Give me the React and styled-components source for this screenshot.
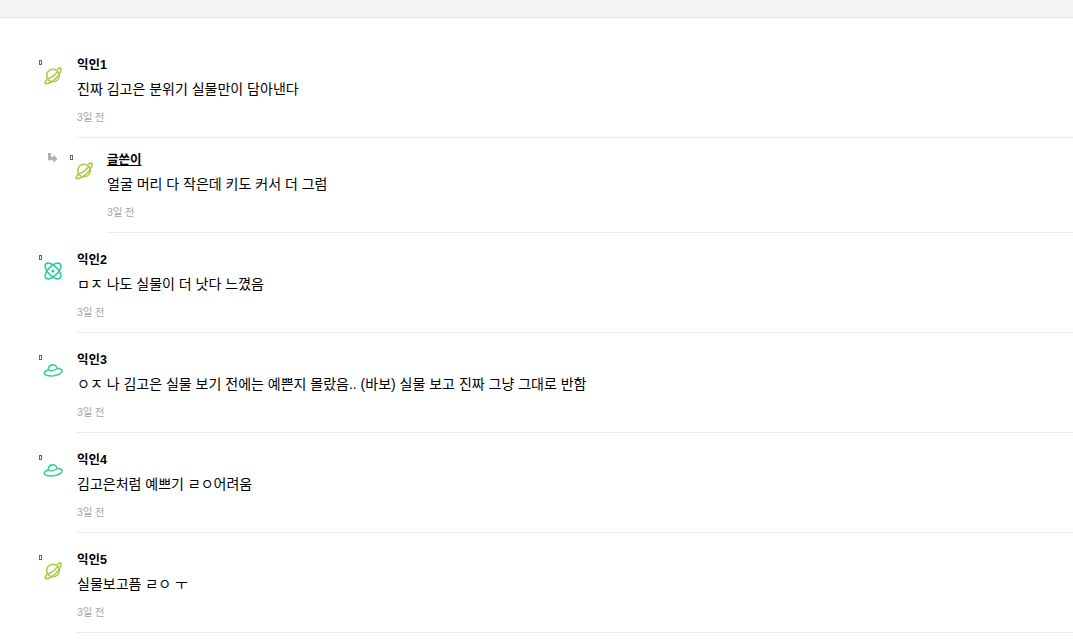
import React from "react";
import styled, { createGlobalStyle } from "styled-components";

const Global = createGlobalStyle`
  html, body { margin: 0; padding: 0; background: #fff; overflow: hidden; }
  body { font-family: "Liberation Sans", "Noto Sans CJK KR", sans-serif; color: #000; }
`;
const TopBar = styled.div`
  height: 17px;
  background: #f4f4f4;
  border-bottom: 1px solid #e4e4e4;
`;
const List = styled.div`
  padding-top: 20px;
  display: flex;
  flex-direction: column;
`;
const Row = styled.div`
  display: flex;
  padding-left: ${p => (p.$reply ? 47 : 39)}px;
`;
const ReplyArrow = styled.svg`
  width: 11px;
  height: 10px;
  margin-top: 15px;
  margin-right: 12px;
  flex: none;
  fill: #b0b0b0;
`;
const Avatar = styled.div`
  width: 37px;
  flex: none;
  display: flex;
  flex-direction: column;
  align-items: flex-start;
  padding-top: ${p => (p.$reply ? 17 : 22)}px;
`;
const Tofu = styled.span`
  display: block;
  width: 1px;
  height: 3px;
  border: 1px solid #666;
`;
const IconWrap = styled.svg`
  width: 20px;
  height: 20px;
  margin-left: 4px;
  margin-top: 1px;
  fill: none;
  stroke: ${p => p.$color};
  stroke-width: 1.6;
`;
const Body = styled.div`
  flex: 1;
  height: ${p => (p.$reply ? 95 : 100)}px;
  padding: ${p => (p.$reply ? "12px 0 0 0" : "17px 0 0 1px")};
  box-sizing: border-box;
  border-bottom: 1px solid #ebebeb;
`;
const Name = styled.div`
  font-size: 12.5px;
  font-weight: 700;
  line-height: 20px;
  height: 20px;
  ${p => p.$reply && "text-decoration: underline;"}
`;
const Text = styled.div`
  font-size: 14px;
  line-height: 20px;
  margin-top: 4px;
`;
const Time = styled.div`
  font-size: 10.5px;
  letter-spacing: -0.2px;
  line-height: 16px;
  color: #a5a5a5;
  margin-top: 10px;
`;

const Planet = () => (
  <IconWrap viewBox="0 0 20 20" $color="#a9cc4e">
    <circle cx="10" cy="9.500" r="6.300" />
    <path d="M4.300 13 C2.300 15.500 1.500 17.400 2.600 17.700 C5 18.200 10 15.300 13.500 11.700 C16.500 8.700 18.500 4.300 18 2.600 C17.700 1.600 16 2 14.400 3.400" />
    <path d="M4.500 13 C8 12 12 9 14.800 5.500" />
  </IconWrap>
);
const Atom = () => (
  <IconWrap viewBox="0 0 20 20" $color="#35c9a0">
    <ellipse cx="10" cy="10" rx="10" ry="4.800" transform="rotate(45 10 10)" />
    <ellipse cx="10" cy="10" rx="10" ry="4.800" transform="rotate(-45 10 10)" />
    <circle cx="10" cy="10" r="0.800" fill="#35c9a0" />
  </IconWrap>
);
const Ufo = () => (
  <IconWrap viewBox="0 0 20 20" $color="#3ccf8e">
    <g transform="rotate(-8 10 10)">
      <path d="M5.500 8.500 C6 4.800 8 3.800 10 3.800 C12.500 3.800 14 5.500 14.500 8" />
      <path d="M5.500 8.200 C2.500 9 1 10 1 11.300 C1 13 5 14.800 10 14.800 C15 14.800 19 13.200 19 11 C19 9.700 17 8.600 14.500 8" />
      <path d="M5.500 8.500 C7.500 10 12.500 10 14.500 8" />
    </g>
  </IconWrap>
);

const icons = { planet: Planet, atom: Atom, ufo: Ufo };
const comments = [
  { name: "익인1", icon: "planet", text: "진짜 김고은 분위기 실물만이 담아낸다" },
  { name: "글쓴이", icon: "planet", text: "얼굴 머리 다 작은데 키도 커서 더 그럼", reply: true },
  { name: "익인2", icon: "atom", text: "ㅁㅈ 나도 실물이 더 낫다 느꼈음" },
  { name: "익인3", icon: "ufo", text: "ㅇㅈ 나 김고은 실물 보기 전에는 예쁜지 몰랐음.. (바보) 실물 보고 진짜 그냥 그대로 반함" },
  { name: "익인4", icon: "ufo", text: "김고은처럼 예쁘기 ㄹㅇ어려움" },
  { name: "익인5", icon: "planet", text: "실물보고픔 ㄹㅇ ㅜ" },
];

export default function App() {
  return (
    <>
      <Global />
      <TopBar />
      <List>
        {comments.map(c => {
          const Icon = icons[c.icon];
          return (
            <Row key={c.name} $reply={c.reply}>
              {c.reply && (
                <ReplyArrow viewBox="0 0 11 10">
                  <path d="M1 0h3v4h2.500V1.500L10.500 6l-4 4V7.300H1z" />
                </ReplyArrow>
              )}
              <Avatar $reply={c.reply}>
                <Tofu />
                <Icon />
              </Avatar>
              <Body $reply={c.reply}>
                <Name $reply={c.reply}>{c.name}</Name>
                <Text>{c.text}</Text>
                <Time>3일 전</Time>
              </Body>
            </Row>
          );
        })}
      </List>
    </>
  );
}
